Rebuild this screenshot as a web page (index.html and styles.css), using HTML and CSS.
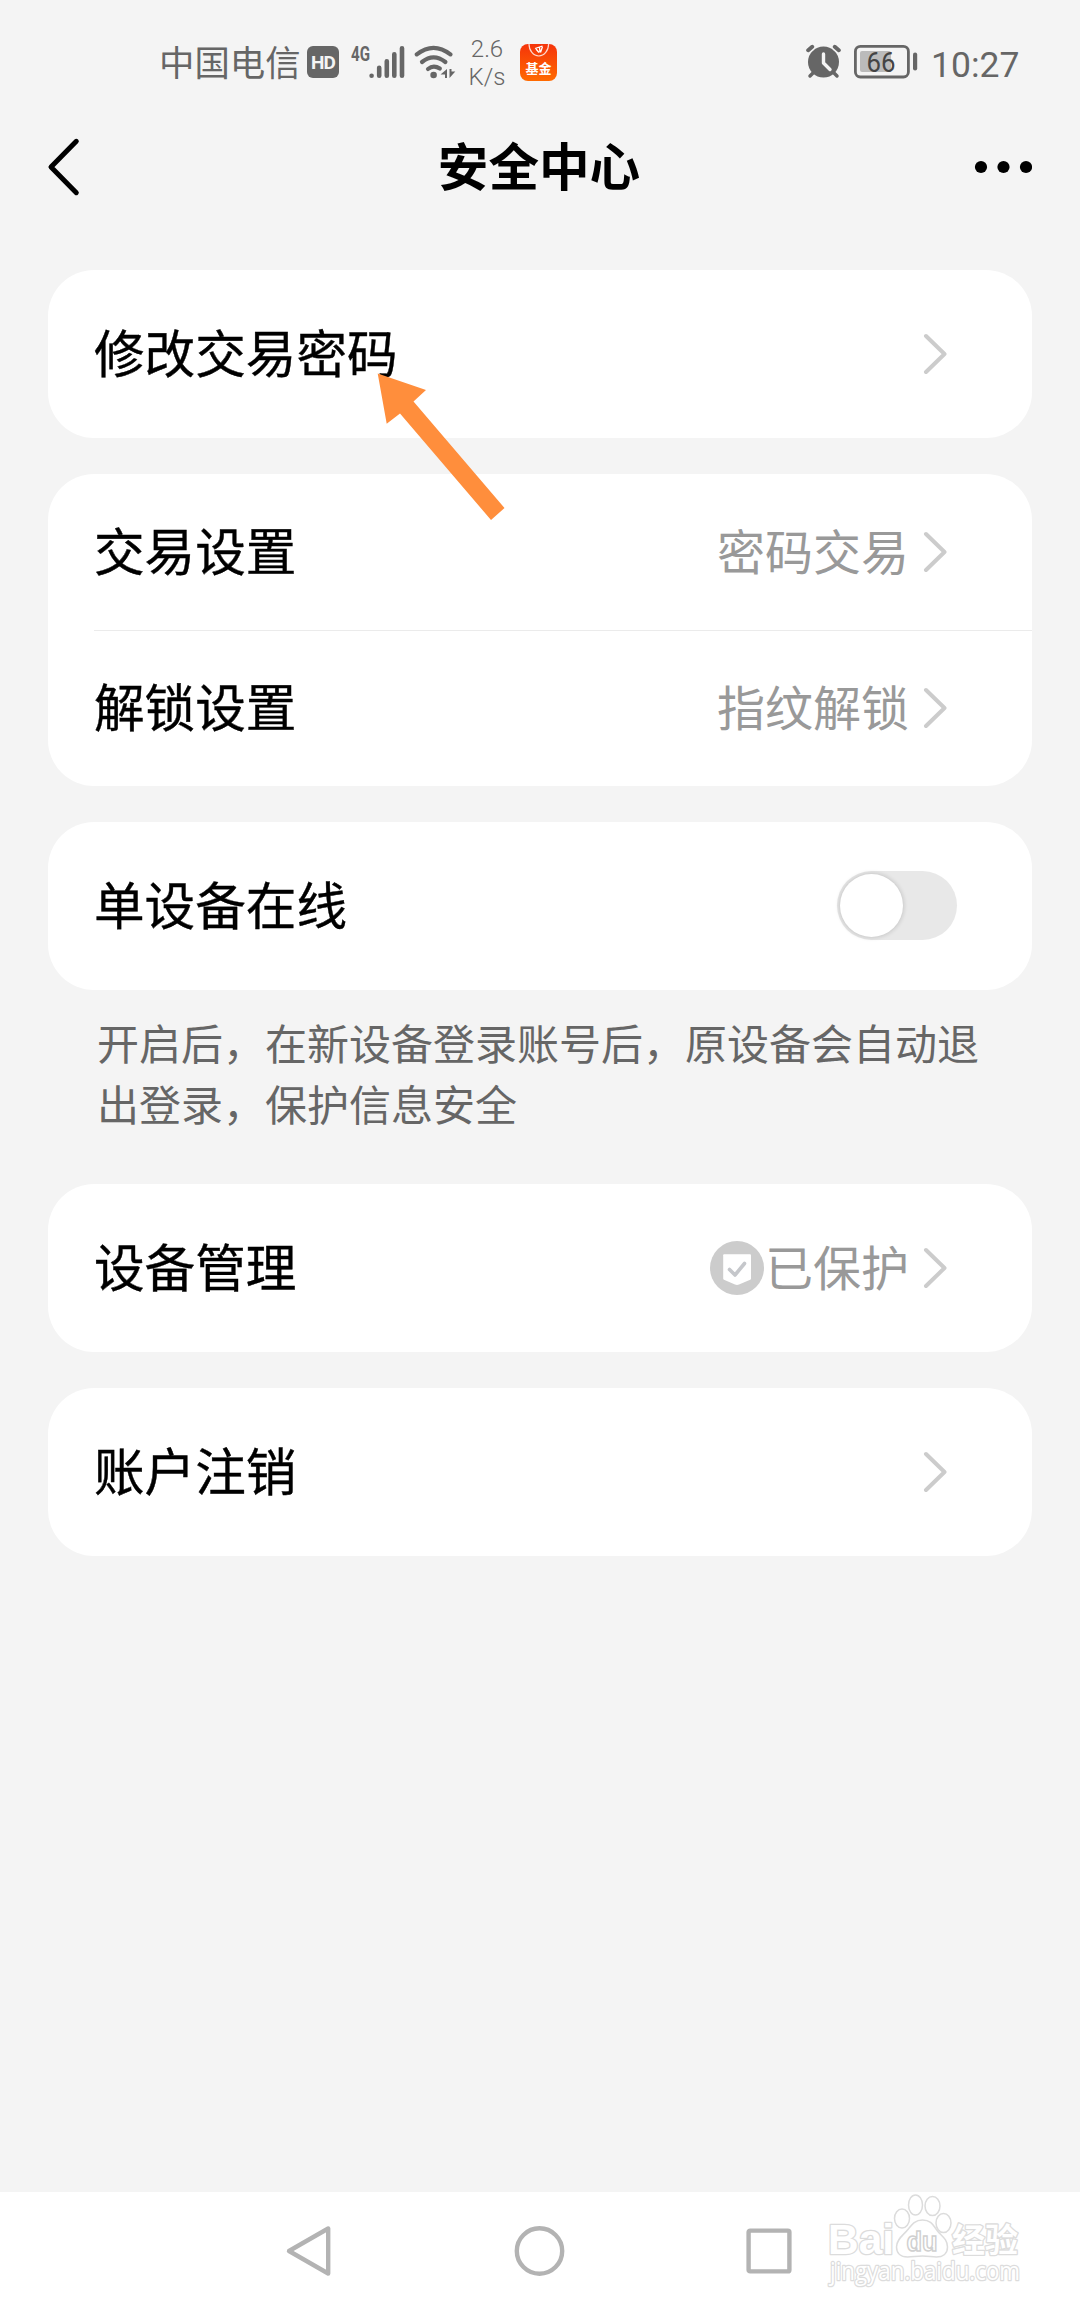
FILE: index.html
```html
<!DOCTYPE html>
<html lang="zh-CN">
<head>
<meta charset="utf-8">
<title>安全中心</title>
<link rel="stylesheet" href="styles.css">
</head>
<body>
<svg class="defs" width="0" height="0">
  <symbol id="chevron" viewBox="0 0 24 42"><path d="M3 3 L21.5 21 L3 39" fill="none" stroke="#ccc" stroke-width="4" stroke-linecap="round" stroke-linejoin="round"/></symbol>
</svg>
<div class="screen">
  <div class="status">
    <span class="carrier">中国电信</span>
    <span class="hd">HD</span>
    <svg class="signal" width="54" height="44" viewBox="0 -4 54 44">
      <text x="0" y="16.5" font-family="Roboto, sans-serif" font-weight="700" font-size="20.5" textLength="19" lengthAdjust="spacingAndGlyphs" fill="#666">4G</text>
      <g stroke="#666" stroke-width="4.6" stroke-linecap="round">
        <path d="M20.6 31.7v.1M28.2 23.7v8M35.8 17.3v14.4M43.3 10.3v21.4M51 4.3v27.4"/>
      </g>
    </svg>
    <svg class="wifi" width="42" height="36" viewBox="0 0 42 36">
      <g fill="none" stroke="#666" stroke-width="4.2" stroke-linecap="round">
        <path d="M2.8 10.4 Q19.5 -2.6 36.4 10.4"/>
        <path d="M8 18 Q19.5 8.6 31.4 18"/>
        <path d="M14 25 Q19.5 20.4 25.8 24.6"/>
      </g>
      <circle cx="19.6" cy="31" r="3.3" fill="#666"/>
      <path d="M33 25v9h-2v-3.500h-4.500zM35.500 34v-9h2v2.500h3.800z" fill="#666"/>
    </svg>
    <span class="speed">2.6<br>K/s</span>
    <span class="fund">
      <svg width="37" height="17" viewBox="0 0 37 17">
        <path d="M9 0a9.800 12 0 0 0 19.600 0" fill="none" stroke="#fff" stroke-opacity=".8" stroke-width="1.200"/>
        <path d="M15 4.500l7.500-2.500M16 5l3 3.500M19.500 3.500l.5 5M22.500 2.500l-2 6" fill="none" stroke="#fff" stroke-width="1.300"/>
      </svg>
      <b>基金</b>
    </span>
    <svg class="alarm" width="36" height="36" viewBox="0 0 36 36">
      <circle cx="17.500" cy="18" r="15.500" fill="#666"/>
      <path d="M2.200 6.200l4-3.400M32.800 6.200l-4-3.400" stroke="#f4f4f4" stroke-width="7"/>
      <path d="M2.200 6.200l4-3.400M32.800 6.200l-4-3.400" stroke="#666" stroke-width="4" stroke-linecap="round"/>
      <path d="M7 29l-3 3M28 29l3 3" stroke="#666" stroke-width="3.500" stroke-linecap="round"/>
      <path d="M17.500 10v9l6.500 6.500" fill="none" stroke="#f4f4f4" stroke-width="3.400" stroke-linecap="round" stroke-linejoin="round"/>
    </svg>
    <svg class="battery" width="64" height="34" viewBox="0 0 64 34">
      <rect x="1.400" y="1.400" width="53" height="30.600" rx="5" fill="none" stroke="#666" stroke-width="2.800"/>
      <rect x="6" y="6" width="31" height="21" rx="2" fill="#bbb"/>
      <rect x="59" y="7.500" width="4.200" height="18" rx="2.100" fill="#666"/>
      <text x="27" y="27" text-anchor="middle" font-family="Roboto, sans-serif" font-size="27" textLength="29" lengthAdjust="spacingAndGlyphs" fill="#444">66</text>
    </svg>
    <span class="clock">10:27</span>
  </div>

  <header class="header">
    <svg width="34" height="60" viewBox="0 0 34 60"><path d="M30.300 4.300 L5 30 L30.300 55.700" fill="none" stroke="#000" stroke-width="5" stroke-linecap="round" stroke-linejoin="round"/></svg>
    <h1>安全中心</h1>
    <svg width="58" height="14" viewBox="0 0 58 14"><circle cx="7" cy="7" r="6.100"/><circle cx="29.500" cy="7" r="6.100"/><circle cx="52" cy="7" r="6.100"/></svg>
  </header>

  <main class="content">
    <section class="card">
      <div class="row"><span class="label">修改交易密码</span><svg class="chev"><use href="#chevron"/></svg></div>
    </section>
    <section class="card">
      <div class="row short"><span class="label">交易设置</span><span class="value">密码交易</span><svg class="chev"><use href="#chevron"/></svg></div>
      <div class="row short"><span class="label">解锁设置</span><span class="value">指纹解锁</span><svg class="chev"><use href="#chevron"/></svg></div>
    </section>
    <div class="group">
      <section class="card">
        <div class="row"><span class="label">单设备在线</span><span class="toggle"><i></i></span></div>
      </section>
      <p class="note">开启后，在新设备登录账号后，原设备会自动退出登录，保护信息安全</p>
    </div>
    <section class="card">
      <div class="row"><span class="label">设备管理</span>
        <svg class="shield" width="54" height="54" viewBox="0 0 54 54">
          <circle cx="27" cy="27" r="27" fill="#ccc"/>
          <path d="M14 13.300h26q1 0 1 1v23.200q0 .8-.8 1.200L29 43.600q-2 .8-4 0L14 38.700q-.8-.4-.8-1.200V14.300q0-1 .8-1z" fill="#fff"/>
          <path d="M19.500 28.500l5.500 5.500L34.500 22.500" fill="none" stroke="#c5c7cb" stroke-width="3.600" stroke-linecap="round" stroke-linejoin="round"/>
        </svg>
        <span class="value">已保护</span><svg class="chev"><use href="#chevron"/></svg></div>
    </section>
    <section class="card">
      <div class="row"><span class="label">账户注销</span><svg class="chev"><use href="#chevron"/></svg></div>
    </section>
  </main>

  <nav class="nav">
    <svg width="52" height="52" viewBox="0 0 52 52"><path d="M45.200 3.500v45L6 26z" fill="none" stroke="#b3b3b3" stroke-width="4.400" stroke-linejoin="round"/></svg>
    <svg width="52" height="52" viewBox="0 0 52 52"><circle cx="26.500" cy="26" r="22.700" fill="none" stroke="#b3b3b3" stroke-width="4.400"/></svg>
    <svg width="52" height="52" viewBox="0 0 52 52"><rect x="5.600" y="5.600" width="40.800" height="40.800" rx="1.500" fill="none" stroke="#b3b3b3" stroke-width="4.400"/></svg>
  </nav>

  <svg class="pointer" width="130" height="150" viewBox="0 0 130 150"><path d="M.7 1.500 L49 18 L36.500 29.500 L127.500 136 L114 148 L23 41.500 L9.700 51.700z" fill="#ff8e3c"/></svg>

  <svg class="watermark" width="220" height="110" viewBox="0 0 220 110">
    <g fill="#fff" stroke="#dcdcdc" stroke-width="1.500">
      <g stroke-width="2.600" paint-order="stroke" stroke-linejoin="round">
        <text x="4" y="62" class="wm-latin" font-size="42" textLength="66" lengthAdjust="spacingAndGlyphs">Bai</text>
        <text x="128" y="60" class="wm-cjk" font-size="33" textLength="66" lengthAdjust="spacingAndGlyphs">经验</text>
        <text x="6" y="88" class="wm-url" font-size="25" textLength="190" lengthAdjust="spacingAndGlyphs">jingyan.baidu.com</text>
      </g>
      <g transform="translate(-3.500 0)">
        <ellipse cx="81.500" cy="26.500" rx="7.500" ry="9.500"/>
        <ellipse cx="95" cy="13" rx="7" ry="10"/>
        <ellipse cx="112" cy="14" rx="7.500" ry="9.500"/>
        <ellipse cx="123" cy="31" rx="7.500" ry="9.500"/>
        <path d="M102 28c9 0 11 6 15 11s10 8 10 16c0 7-5 10-11 10-5 0-8-1-14-1s-10 1-15 1c-7 0-11-4-11-10 0-8 7-12 11-17s7-10 15-10z"/>
        <text x="86" y="59" class="wm-du" font-size="27" textLength="31" lengthAdjust="spacingAndGlyphs" stroke="#d0d0d0">du</text>
      </g>
    </g>
  </svg>
</div>
</body>
</html>
```
FILE: styles.css
```css
* { box-sizing: border-box; }

body {
  margin: 0;
  background: #f4f4f4;
  font-family: "Noto Sans CJK SC", sans-serif;
}

svg { display: block; flex: none; }
.defs { position: absolute; }

.screen {
  position: relative;
  width: 1080px;
  height: 2310px;
  display: flex;
  flex-direction: column;
  overflow: hidden;
}

/* Status bar */
.status {
  height: 106px;
  padding: 18px 60px 0 159px;
  display: flex;
  align-items: center;
  color: #666;
  white-space: nowrap;
}
.carrier { width: 148px; padding-bottom: 2px; font-size: 35.400px; line-height: 50px; }
.hd {
  width: 32px;
  height: 32px;
  border-radius: 6px;
  background: #666;
  color: #f4f4f4;
  font: 700 19px/33px Roboto, sans-serif;
  letter-spacing: -1px;
  text-align: center;
}
.signal { margin-left: 12px; }
.wifi { margin-left: 9px; }
.speed {
  width: 50px;
  margin-left: 6px;
  padding-top: 2px;
  font: 300 24px/28px Roboto, sans-serif;
  text-align: center;
}
.fund {
  width: 37px;
  height: 37px;
  margin-left: 8px;
  border-radius: 8px;
  background: linear-gradient(#f5340a, #ff6a00);
  color: #fff;
  overflow: hidden;
  text-align: center;
}
.fund b { display: block; font-size: 13px; line-height: 13px; }
.alarm { margin-left: auto; }
.battery { margin-left: 12px; }
.clock {
  width: 89px;
  margin-left: 13px;
  padding-top: 5px;
  font: 400 35.500px/42px Roboto, sans-serif;
}

/* Title bar */
.header {
  height: 122px;
  padding: 0 48px 0 46px;
  display: flex;
  align-items: center;
  justify-content: space-between;
}
.header h1 {
  margin: 0;
  padding: 0 0 7px 24px;
  font-size: 50.600px;
  line-height: 70px;
  font-weight: 700;
}

/* Settings */
.content {
  flex: 1;
  padding: 42px 48px 0;
  display: flex;
  flex-direction: column;
  gap: 36px;
}
.card {
  border-radius: 46px;
  background: #fff;
  padding-left: 46px;
}
.row {
  height: 168px;
  padding-right: 85px;
  display: flex;
  align-items: center;
}
.row.short { height: 156px; }
.row.short + .row.short { border-top: 1px solid #ebebeb; padding-bottom: 2px; }
.label {
  flex: 1;
  padding-bottom: 6px;
  font-size: 50.600px;
  line-height: 74px;
  color: #000;
  -webkit-text-stroke: .4px #000;
}
.value { padding-bottom: 6px; font-size: 48px; line-height: 70px; color: #999; }
.chev { width: 24px; height: 42px; margin-left: 14px; }
.shield { margin-right: 1px; }
.toggle {
  width: 120px;
  height: 69px;
  margin: 0 -10px 1px 0;
  padding: 3px;
  border-radius: 35px;
  background: #e8e8e8;
}
.toggle i {
  display: block;
  width: 63px;
  height: 63px;
  border-radius: 50%;
  background: #fff;
  box-shadow: 0 0 4px 1px rgba(0, 0, 0, .14);
}
.note {
  height: 158px;
  margin: 0;
  padding: 21px 47px 0 49px;
  color: #666;
  font-size: 42px;
  line-height: 61px;
}

/* System navigation */
.nav {
  height: 118px;
  padding: 0 285px 0 283px;
  background: #fff;
  display: flex;
  align-items: center;
  justify-content: space-between;
}

/* Overlays */
.pointer { position: absolute; left: 377px; top: 372px; }
.watermark { position: absolute; left: 824px; top: 2192px; }
.wm-latin { font-family: "Liberation Sans", sans-serif; font-weight: 700; }
.wm-cjk { font-family: "Noto Sans CJK SC", sans-serif; font-weight: 700; }
.wm-url { font-family: "Open Sans", sans-serif; }
.wm-du { font-family: "Liberation Sans", sans-serif; font-weight: 700; }
```
